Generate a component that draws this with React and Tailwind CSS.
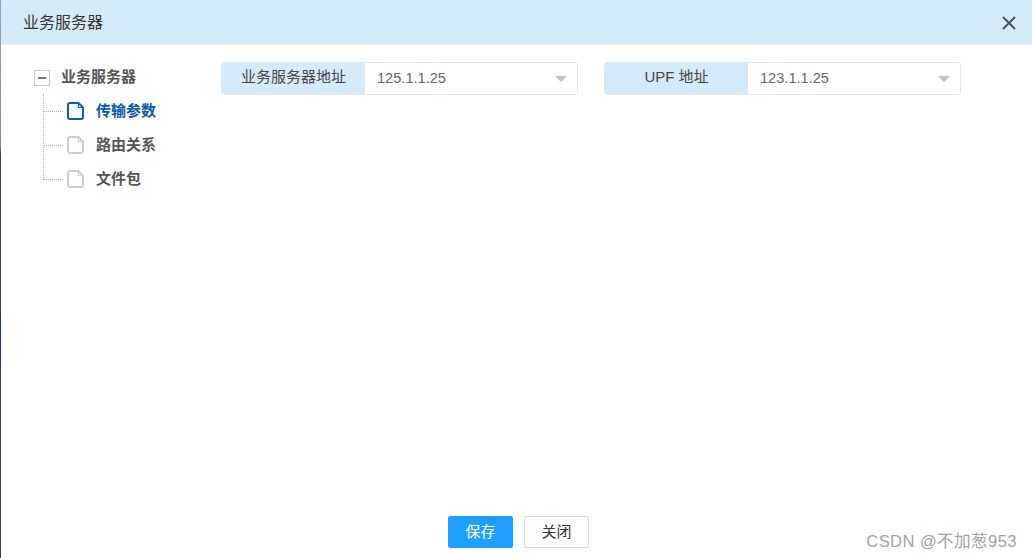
const sans = '"Liberation Sans","Noto Sans CJK SC",sans-serif';

function FileIcon({ color }) {
  return (
    <svg width="17" height="18" viewBox="0 0 17 18" fill="none" className="shrink-0">
      <path d="M3 1H11.5L16 5.5V15A2 2 0 0 1 14 17H3A2 2 0 0 1 1 15V3A2 2 0 0 1 3 1Z" stroke={color} strokeWidth="2" />
      <path d="M11.5 2V5.5H15" stroke={color} strokeWidth="1.2" />
    </svg>
  );
}

function Leaf({ label, active }) {
  return (
    <div className="flex h-[34px] items-center">
      <div className="h-0 w-[20px] border-t border-dotted border-[#b4b4b4]" />
      <div className="ml-[4px]"><FileIcon color={active ? "#0a5fb0" : "#c8ced8"} /></div>
      <span className={`ml-[12px] text-[15px] font-bold ${active ? "text-[#0b5aa5]" : "text-[#555555]"}`}>{label}</span>
    </div>
  );
}

function Field({ label, value }) {
  return (
    <div className="flex h-[33px] w-[357px] overflow-hidden rounded-[3px] border border-[#e6e6e6]">
      <div className="flex w-[143px] items-center justify-center bg-[#d6ebfa] pb-[3px] text-[15px] text-[#444444]">{label}</div>
      <div className="flex flex-1 items-center justify-between bg-white pl-[12px] pr-[10px]">
        <span className="pt-[1px] text-[14.6px] text-[#666666]">{value}</span>
        <span className="h-0 w-0 border-x-[6px] border-t-[6px] border-x-transparent border-t-[#c4c4c4]" />
      </div>
    </div>
  );
}

export default function App() {
  return (
    <div className="relative flex h-[558px] w-[1032px] flex-col overflow-hidden bg-white" style={{ fontFamily: sans }}>
      <header className="flex h-[45px] shrink-0 items-center justify-between border-b border-[#e8f3fb] bg-[#d6ebfa] pl-[23px] pr-[15px] pt-[1px]">
        <span className="text-[16px] text-[#333333]">业务服务器</span>
        <svg width="16" height="16" viewBox="0 0 16 16" fill="none">
          <path d="M2 2L14 14M14 2L2 14" stroke="#4a5260" strokeWidth="2" />
        </svg>
      </header>
      <main className="flex min-h-0 flex-1 pl-[1px] pt-[17px]">
        <nav className="w-[220px] shrink-0 pl-[33px]">
          <div className="flex h-[32px] items-center">
            <div className="flex h-[16px] w-[16px] items-center justify-center border border-[#c3c8d0]">
              <div className="h-[2px] w-[8px] bg-[#777777]" />
            </div>
            <span className="ml-[11px] pb-[2px] text-[15px] font-bold text-[#555555]">业务服务器</span>
          </div>
          <div className="relative ml-[9px]">
            <div className="absolute left-0 top-0 h-[84px] border-l border-dotted border-[#b4b4b4]" />
            <Leaf label="传输参数" active />
            <Leaf label="路由关系" />
            <Leaf label="文件包" />
          </div>
        </nav>
        <section className="flex items-start gap-[26px]">
          <Field label="业务服务器地址" value="125.1.1.25" />
          <Field label="UPF 地址" value="123.1.1.25" />
        </section>
      </main>
      <footer className="flex h-[42px] shrink-0 items-start justify-center gap-[11px] pl-[5px]">
        <button className="h-[32px] w-[65px] rounded-[2px] bg-[#1f9fff] text-[15px] text-white">保存</button>
        <button className="h-[32px] w-[65px] rounded-[2px] border border-[#dedede] bg-white text-[15px] text-[#333333]">关闭</button>
      </footer>
      <div className="absolute inset-y-0 left-0 w-[1px] bg-[linear-gradient(to_bottom,#a0a0a0_0,#8a8a8a_145px,#3c3c3c_155px,#3c3c3c_315px,#1a2a90_325px,#1a2a90_358px,#3c3c3c_368px,#3c3c3c_100%)]" />
      <div className="absolute bottom-[3px] right-[15px] text-[16.6px] tracking-[0.4px] text-[#a3a3a3]">CSDN @不加葱953</div>
    </div>
  );
}
